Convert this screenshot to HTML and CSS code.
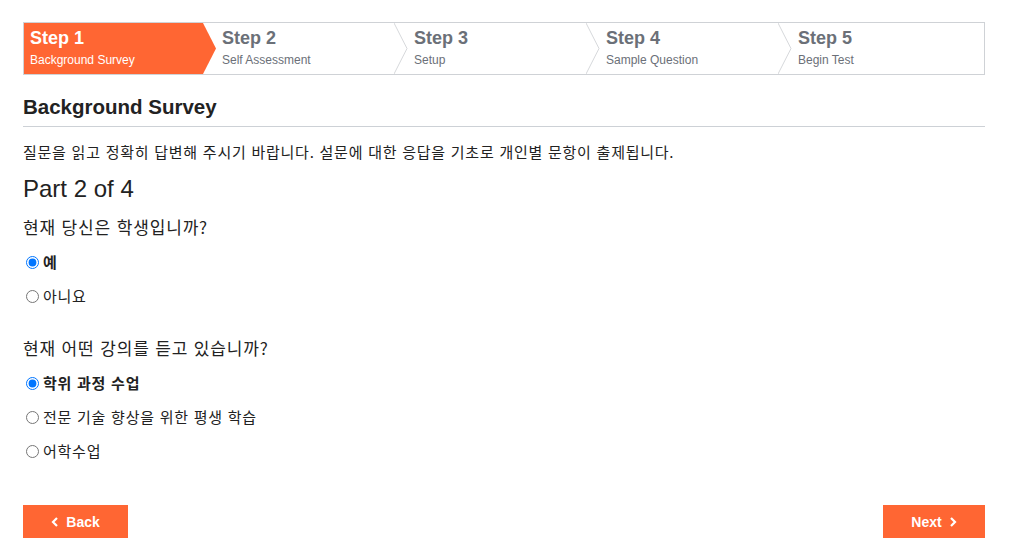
FILE: index.html
```html
<!DOCTYPE html>
<html lang="ko">
<head>
    <meta charset="UTF-8">
    <meta name="viewport" content="width=device-width, initial-scale=1.0">
    <title>Background Survey</title>
    <link rel="stylesheet" href="styles.css">
</head>
<body>
    <div class="page">
        <div class="stepper">
            <div class="step active">
                <div class="step-num">Step 1</div>
                <div class="step-name">Background Survey</div>
            </div>
            <div class="step">
                <svg class="sep" viewBox="0 0 14 53" preserveAspectRatio="none"><polyline points="0,0 13,26.5 0,53" /></svg>
                <div class="step-num">Step 2</div>
                <div class="step-name">Self Assessment</div>
            </div>
            <div class="step">
                <svg class="sep" viewBox="0 0 14 53" preserveAspectRatio="none"><polyline points="0,0 13,26.5 0,53" /></svg>
                <div class="step-num">Step 3</div>
                <div class="step-name">Setup</div>
            </div>
            <div class="step">
                <svg class="sep" viewBox="0 0 14 53" preserveAspectRatio="none"><polyline points="0,0 13,26.5 0,53" /></svg>
                <div class="step-num">Step 4</div>
                <div class="step-name">Sample Question</div>
            </div>
            <div class="step">
                <svg class="sep" viewBox="0 0 14 53" preserveAspectRatio="none"><polyline points="0,0 13,26.5 0,53" /></svg>
                <div class="step-num">Step 5</div>
                <div class="step-name">Begin Test</div>
            </div>
        </div>

        <h2 class="title">Background Survey</h2>
        <p class="intro">질문을 읽고 정확히 답변해 주시기 바랍니다. 설문에 대한 응답을 기초로 개인별 문항이 출제됩니다.</p>
        <div class="part">Part 2 of 4</div>

        <div class="question">현재 당신은 학생입니까?</div>
        <label class="option first checked"><input type="radio" name="q1" checked>예</label>
        <label class="option"><input type="radio" name="q1">아니요</label>

        <div class="question second">현재 어떤 강의를 듣고 있습니까?</div>
        <label class="option first checked"><input type="radio" name="q2" checked>학위 과정 수업</label>
        <label class="option"><input type="radio" name="q2">전문 기술 향상을 위한 평생 학습</label>
        <label class="option"><input type="radio" name="q2">어학수업</label>

        <div class="actions">
            <button class="btn back"><svg viewBox="0 0 8 10"><polyline points="6,1 2,5 6,9" /></svg>Back</button>
            <button class="btn next">Next<svg viewBox="0 0 8 10"><polyline points="2,1 6,5 2,9" /></svg></button>
        </div>
    </div>
</body>
</html>
```

FILE: styles.css
```css
body {
    margin: 0;
    background-color: #fff;
    color: #222;
    font-family: "Liberation Sans", Arial, "Noto Sans CJK KR", sans-serif;
}
.page {
    width: 962px;
    margin: 0 0 0 23px;
    padding-top: 22px;
}

/* step bar */
.stepper {
    display: flex;
    height: 51px;
    border: 1px solid #cfd2d6;
}
.step {
    position: relative;
    flex: 1;
    padding: 4px 0 0 6px;
    color: #6b7078;
}
.step.active {
    background-color: #ff6633;
    color: #fff;
    margin-right: -13px;
    z-index: 1;
    clip-path: polygon(0 0, calc(100% - 13px) 0, 100% 50%, calc(100% - 13px) 100%, 0 100%);
}
.step.active + .step {
    padding-left: 19px;
}
.sep {
    position: absolute;
    left: -14px;
    top: 0;
    width: 14px;
    height: 100%;
}
.sep polyline {
    fill: none;
    stroke: #d5d7da;
    stroke-width: 1;
}
.step-num {
    font-size: 18px;
    font-weight: bold;
    line-height: 22px;
}
.step-name {
    font-size: 12px;
    line-height: 16px;
    margin-top: 3px;
}

/* content */
.title {
    margin: 20px 0 0;
    padding-bottom: 7px;
    font-size: 20.5px;
    line-height: 24px;
    border-bottom: 1px solid #cdd1d6;
}
.intro {
    margin: 15px 0 0;
    font-size: 15px;
    line-height: 20px;
    letter-spacing: 0.05em;
    font-family: "Noto Sans CJK KR", sans-serif;
}
.part {
    margin-top: 13px;
    font-size: 24px;
    line-height: 28px;
}
.question {
    margin-top: 12px;
    font-size: 17px;
    line-height: 24px;
    letter-spacing: 0.05em;
    font-family: "Noto Sans CJK KR", sans-serif;
}
.question.second {
    margin-top: 30px;
}
.option {
    display: flex;
    align-items: center;
    margin-top: 14px;
    font-size: 15px;
    line-height: 20px;
    letter-spacing: 0.05em;
    font-family: "Noto Sans CJK KR", sans-serif;
}
.option.first {
    margin-top: 13px;
}
.option.checked {
    font-weight: bold;
}
.option input {
    width: 13px;
    height: 13px;
    margin: 0 4px 0 3px;
}

/* buttons */
.actions {
    display: flex;
    justify-content: space-between;
    margin-top: 44px;
}
.btn {
    display: flex;
    align-items: center;
    justify-content: center;
    gap: 7px;
    height: 33px;
    padding: 0;
    border: none;
    background-color: #ff6633;
    color: #fff;
    font-family: "Liberation Sans", Arial, sans-serif;
    font-size: 14px;
    font-weight: bold;
    box-shadow: 0 2px 0 #d3d3d3;
    cursor: pointer;
}
.btn.back {
    width: 105px;
}
.btn.next {
    width: 102px;
}
.btn svg {
    width: 8px;
    height: 10px;
}
.btn polyline {
    fill: none;
    stroke: #fff;
    stroke-width: 2.2;
}
```
